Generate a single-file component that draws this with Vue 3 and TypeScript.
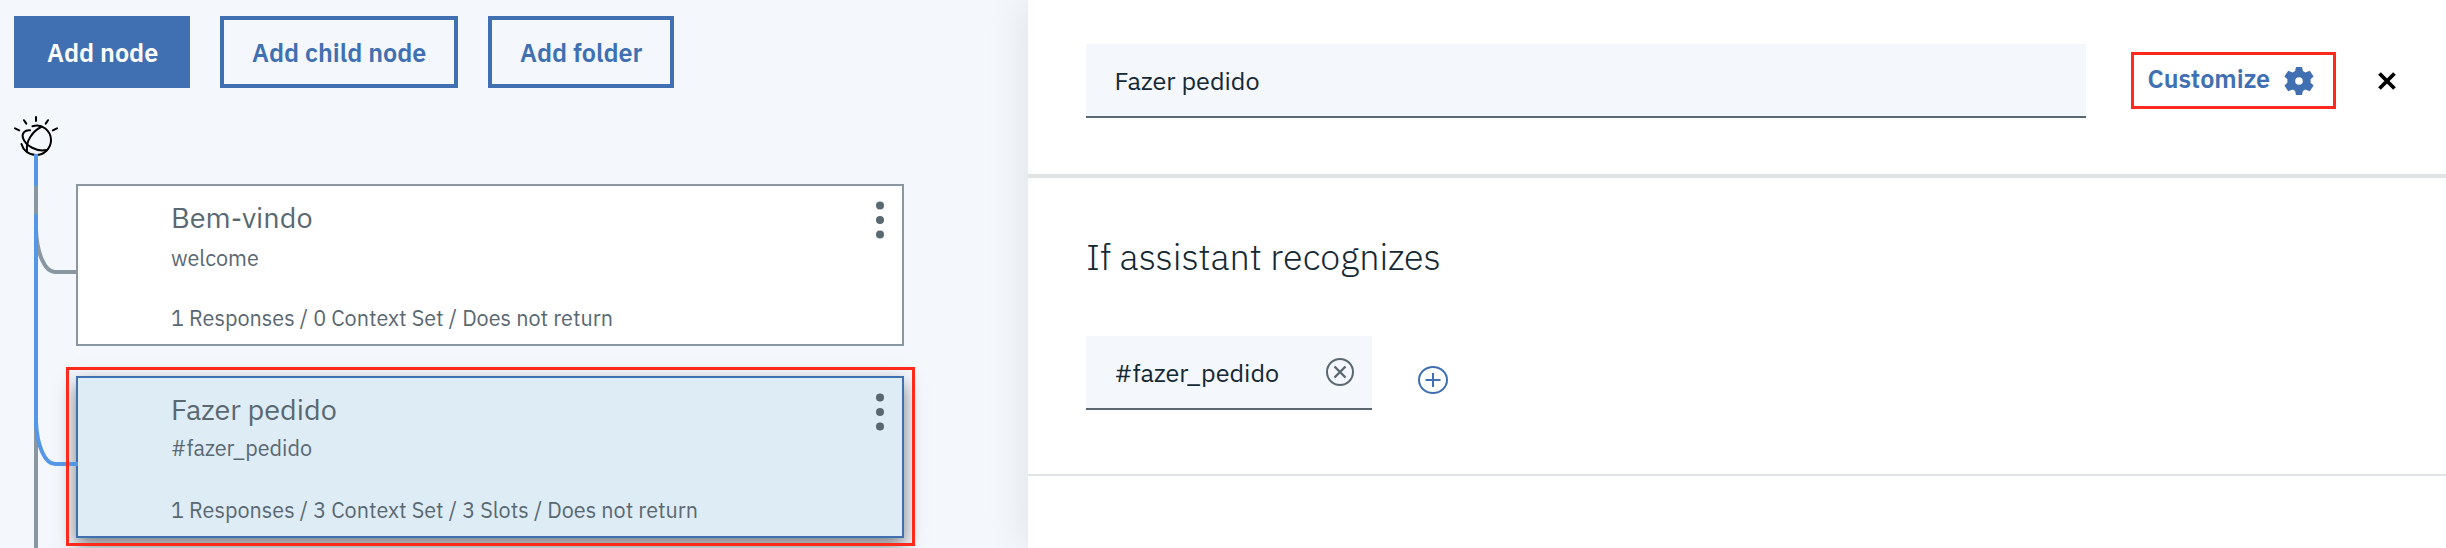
<script setup lang="ts">
interface DialogNode {
  title: string
  condition: string
  summary: string
  selected: boolean
}

const actions: { label: string; primary: boolean }[] = [
  { label: 'Add node', primary: true },
  { label: 'Add child node', primary: false },
  { label: 'Add folder', primary: false },
]

const nodes: DialogNode[] = [
  {
    title: 'Bem-vindo',
    condition: 'welcome',
    summary: '1 Responses / 0 Context Set / Does not return',
    selected: false,
  },
  {
    title: 'Fazer pedido',
    condition: '#fazer_pedido',
    summary: '1 Responses / 3 Context Set / 3 Slots / Does not return',
    selected: true,
  },
]
</script>

<template>
  <div class="workspace">
    <section class="tree">
      <div class="toolbar">
        <button
          v-for="action in actions"
          :key="action.label"
          class="btn"
          :class="{ 'btn-primary': action.primary }"
        >
          {{ action.label }}
        </button>
      </div>

      <div class="nodes">
        <article v-for="node in nodes" :key="node.title" class="node" :class="{ selected: node.selected }">
          <div class="node-text">
            <h3 class="node-title">{{ node.title }}</h3>
            <p class="node-condition">{{ node.condition }}</p>
            <p class="node-summary">{{ node.summary }}</p>
          </div>
          <svg class="kebab" width="8" height="38" viewBox="0 0 8 38">
            <circle cx="4" cy="4.5" r="4" />
            <circle cx="4" cy="19" r="4" />
            <circle cx="4" cy="33.4" r="4" />
          </svg>
        </article>
      </div>

      <svg class="wires" width="80" height="448" viewBox="0 100 80 448" fill="none">
        <g stroke="#000" stroke-width="2" stroke-linecap="round">
          <path d="M36 117v4M24 120.200l2.300 3.400M48 120.200l-2.300 3.400M15 128.400l4.200 2M57 128.400l-4.200 2" />
          <path d="M32.500 126.300C42 123 51 131 51 140C51 148.500 44 155 36 155C28.500 155 23 150 21.500 144" />
          <path d="M30 130.300C25 129.800 21.500 133 23 138C25.500 146 37 152 46.500 150" />
          <path d="M41 127C33 131 25.500 141 27 151" />
        </g>
        <path d="M36 186v362" stroke="#8897a2" stroke-width="4" />
        <path d="M36 230C37 254 45 272 55 272H76" stroke="#8897a2" stroke-width="4" />
        <path d="M36 154v32M36 214v214" stroke="#5596e6" stroke-width="4" />
        <path d="M36 422C37 446 45 464 55 464H78" stroke="#5596e6" stroke-width="4" />
      </svg>
      <div class="highlight node-highlight"></div>
    </section>

    <main class="panel">
      <header class="panel-header">
        <div class="name-field">Fazer pedido</div>
        <div class="customize">
          <span>Customize</span>
          <svg width="30" height="28" viewBox="0 0 30 28">
            <path
              fill="#4070b1"
              fill-rule="evenodd"
              d="M12 0h6l.9 4.100 2.500 1.400 4.400-1.700 3.800 5.700-3 2.700v3.600l3 2.700-3.800 5.700-4.400-1.700-2.500 1.400L18 28h-6l-.9-4.100-2.500-1.400-4.400 1.700L.4 18.500l3-2.700v-3.600l-3-2.700 3.800-5.700 4.400 1.700 2.500-1.400zM15 10.200a3.800 3.800 0 1 0 0 7.600a3.800 3.800 0 1 0 0-7.600z"
            />
          </svg>
        </div>
        <svg class="close" width="18" height="18" viewBox="0 0 18 18">
          <path d="M1.500 1.500l15 15M16.500 1.500l-15 15" stroke="#000" stroke-width="3.800" />
        </svg>
      </header>

      <section class="recognizes">
        <h2>If assistant recognizes</h2>
        <div class="conditions">
          <div class="chip">
            <span>#fazer_pedido</span>
            <svg width="28" height="28" viewBox="0 0 28 28" fill="none" stroke="#5a6872">
              <circle cx="14" cy="14" r="13" stroke-width="2" />
              <path d="M8.500 8.500l11 11M19.500 8.500l-11 11" stroke-width="2.400" />
            </svg>
          </div>
          <svg class="add" width="30" height="28" viewBox="0 0 30 28" fill="none" stroke="#4070b1">
            <ellipse cx="15" cy="14" rx="14" ry="13" stroke-width="2" />
            <path d="M15 7v14M7.500 14h15" stroke-width="2" />
          </svg>
        </div>
      </section>
    </main>
  </div>
</template>

<style>
body {
  margin: 0;
}
</style>

<style scoped>
.workspace {
  display: flex;
  width: 2446px;
  height: 548px;
  overflow: hidden;
  background: #f4f7fc;
  font-family: 'IBM Plex Sans', Roboto, sans-serif;
}

.workspace * {
  box-sizing: border-box;
}

.tree {
  position: relative;
  width: 1028px;
  flex: none;
  padding: 16px 0 0 14px;
}

.toolbar {
  display: flex;
  gap: 30px;
}

.btn {
  height: 72px;
  padding: 2px 28px 0;
  border: 4px solid #4070b1;
  background: transparent;
  color: #4070b1;
  font: 600 25.2px/1 'IBM Plex Sans', Roboto, sans-serif;
  text-align: left;
  white-space: nowrap;
}

.btn:nth-child(1) {
  width: 176px;
  padding-left: 29px;
}

.btn:nth-child(2) {
  width: 238px;
}

.btn:nth-child(3) {
  width: 186px;
}

.btn-primary {
  background: #4070b1;
  color: #fff;
}

.nodes {
  display: flex;
  flex-direction: column;
  gap: 30px;
  margin: 96px 0 0 62px;
}

.node {
  display: flex;
  justify-content: space-between;
  width: 828px;
  height: 162px;
  padding: 13px 18px 12px 93px;
  border: 2px solid #8897a2;
  background: #fff;
  color: #5a6872;
}

.node.selected {
  border-color: #4070b1;
  background: #deecf6;
  box-shadow: 0 8px 18px rgba(0, 0, 0, 0.5);
}

.node-text {
  display: flex;
  flex-direction: column;
}

.node-title {
  margin: 0;
  font-size: 28.8px;
  font-weight: 400;
  line-height: 36px;
}

.node-condition,
.node-summary {
  margin: 0;
  font-size: 21.6px;
  line-height: 28px;
}

.node-condition {
  margin-top: 9px;
}

.selected .node-condition {
  margin-top: 7px;
}

.node-summary {
  margin-top: auto;
}

.kebab {
  margin-top: 2px;
  fill: #5a6872;
}

.wires {
  position: absolute;
  left: 0;
  top: 100px;
}

.highlight {
  border: 3px solid #ff2a1c;
}

.node-highlight {
  position: absolute;
  left: 66px;
  top: 367px;
  width: 849px;
  height: 179px;
}

.panel {
  position: relative;
  flex: 1;
  background: #fff;
  color: #152935;
  box-shadow: 0 0 40px rgba(0, 0, 0, 0.1);
}

.panel-header {
  display: flex;
  align-items: flex-start;
  height: 178px;
  padding: 44px 50px 0 58px;
  border-bottom: 4px solid #dfe3e6;
}

.name-field {
  width: 1000px;
  height: 74px;
  padding-left: 28.5px;
  border-bottom: 2px solid #5a6872;
  background: #f4f7fb;
  font-size: 25.2px;
  line-height: 74px;
}

.customize {
  display: flex;
  align-items: center;
  justify-content: space-between;
  width: 205px;
  height: 57px;
  margin: 8px 0 0 45px;
  padding: 0 19px 0 13.5px;
  border: 3px solid #ff2a1c;
  color: #4070b1;
  font-size: 25.2px;
  font-weight: 600;
  line-height: 50px;
}

.customize span {
  padding-bottom: 3px;
}

.close {
  margin: 28px 0 0 42px;
}

.recognizes {
  height: 298px;
  padding: 55px 0 0 58px;
  border-bottom: 2px solid #dfe3e6;
}

h2 {
  margin: 0;
  font-size: 36px;
  font-weight: 300;
  line-height: 48px;
}

.conditions {
  display: flex;
  align-items: flex-start;
  margin-top: 55px;
}

.chip {
  display: flex;
  align-items: center;
  justify-content: space-between;
  width: 286px;
  height: 74px;
  padding: 0 18px 0 28.5px;
  border-bottom: 2px solid #5a6872;
  background: #f4f7fb;
  font-size: 25.2px;
  line-height: 74px;
}

.chip span {
  height: 72px;
}

.add {
  margin: 30px 0 0 46px;
}
</style>
